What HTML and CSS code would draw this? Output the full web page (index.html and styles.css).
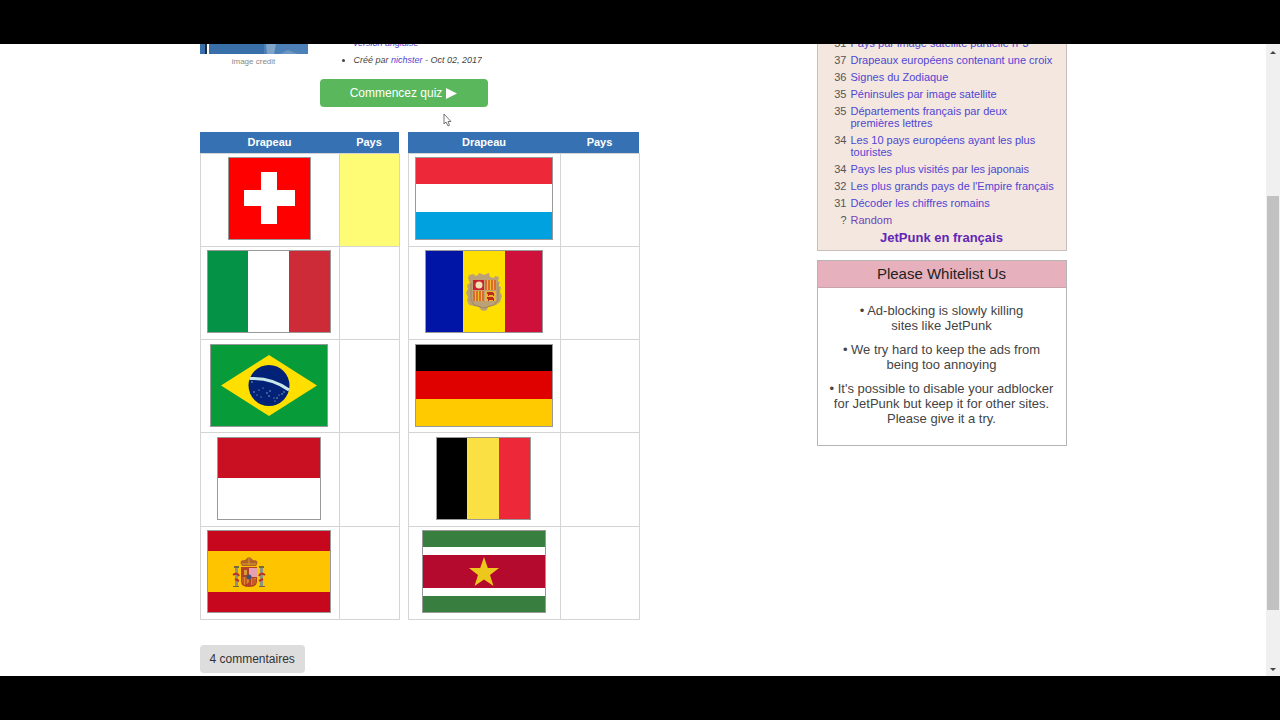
FILE: index.html
```html
<!DOCTYPE html>
<html lang="fr">
<head>
<meta charset="utf-8">
<title>Drapeaux - JetPunk</title>
<link rel="stylesheet" href="styles.css">
</head>
<body>
<div class="window">
  <div class="page">
    <div class="content">
      <main class="main">
        <div class="intro">
          <figure class="photo">
            <svg class="photo-img" viewBox="0 0 108 10" preserveAspectRatio="none" aria-hidden="true">
              <rect width="108" height="10" fill="#3a70aa"/>
              <rect x="64" width="44" height="10" fill="#4c80b6"/>
              <path d="M66 0h10l-2 10h-7z" fill="#7fa3c9"/>
              <path d="M80 10l8-4 10 4z" fill="#6d97c3"/>
              <path d="M5 0h2v10H5z" fill="#1d2c3c"/>
              <path d="M7 0h2v10H7z" fill="#fff"/>
            </svg>
            <figcaption>image credit</figcaption>
          </figure>
          <ul class="facts">
            <li class="plain"><a class="link" href="#">version anglaise</a></li>
            <li>Créé par <a class="link" href="#">nichster</a> - Oct 02, 2017</li>
          </ul>
        </div>
        <button class="start" type="button">Commencez quiz
          <svg width="11" height="11" viewBox="0 0 11 11" aria-hidden="true"><path d="M0 0L11 5.500L0 11z" fill="#fff"/></svg>
        </button>
        <div class="tables">
          <table class="quiz quiz-left">
            <thead><tr><th class="flag-col">Drapeau</th><th>Pays</th></tr></thead>
            <tbody>
              <tr><td><svg class="flag" width="83" height="83" viewBox="0 0 83 83"><rect width="83" height="83" fill="#fe0000"/><path d="M33 15h16v18h18v16H49v18H33V49H16V33h17z" fill="#fff"/></svg></td><td class="active"></td></tr>
              <tr><td><svg class="flag" width="124" height="83" viewBox="0 0 124 83"><rect width="124" height="83" fill="#fff"/><rect width="41" height="83" fill="#049247"/><rect x="82" width="42" height="83" fill="#cd2b38"/></svg></td><td></td></tr>
              <tr><td><svg class="flag" width="118" height="83" viewBox="0 0 118 83"><rect width="118" height="83" fill="#079b39"/><path d="M11 41.500L59 11l48 30.500L59 72z" fill="#fedf00"/><circle cx="59" cy="41.500" r="20.500" fill="#012276"/><path d="M39.500 34.500Q62 33.500 79 46" fill="none" stroke="#c9e6ea" stroke-width="3"/><g fill="#b4c5dd"><circle cx="42" cy="38" r=".7"/><circle cx="44" cy="48" r=".7"/><circle cx="47" cy="51" r=".6"/><circle cx="49" cy="46" r=".6"/><circle cx="53" cy="44" r=".6"/><circle cx="57" cy="49" r=".7"/><circle cx="60" cy="47" r=".7"/><circle cx="59" cy="52" r=".7"/><circle cx="64" cy="54" r=".6"/><circle cx="67" cy="54" r=".7"/><circle cx="69" cy="51" r=".6"/><circle cx="72" cy="50" r=".7"/><circle cx="74" cy="48" r=".7"/><circle cx="51" cy="53" r=".6"/><circle cx="65" cy="57" r=".6"/></g></svg></td><td></td></tr>
              <tr><td><svg class="flag" width="104" height="83" viewBox="0 0 104 83"><rect width="104" height="83" fill="#fff"/><rect width="104" height="41" fill="#c91022"/></svg></td><td></td></tr>
              <tr><td><svg class="flag" width="124" height="83" viewBox="0 0 124 83"><rect width="124" height="83" fill="#c6071e"/><rect y="21" width="124" height="41" fill="#ffc400"/>
                <g><path d="M28 37h3v19h-3zM53 37h3v19h-3z" fill="#8e9384"/><path d="M27 36h5v2h-5zM52 36h5v2h-5zM26 56h6v1h-6zM52 56h6v1h-6z" fill="#776a39"/><path d="M26 45q4-3 6 1m-4 3l4 2M58 45q-4-3-6 1m4 3l-4 2" fill="none" stroke="#b93328" stroke-width="2"/>
                <path d="M34 37h16v14q0 6-8 6t-8-6z" fill="#b34027"/><path d="M42 38h8v9h-8z" fill="#e3a1b3"/><path d="M35 47h7v5q-2 3-5 3-2-2-2-3zM44 48h5v5q-2 3-5 2z" fill="#dd832b"/><path d="M36 47v8M39 47v9M46 48v8M48 49v6" stroke="#a83622"/><circle cx="42" cy="47" r="2.500" fill="#3d5478"/><path d="M37 40h3v5h-3z" fill="#d69a35"/>
                <path d="M35 36q-4-6 3-6 3-3 4-3t4 3q7 0 3 6z" fill="#b26128"/><path d="M35 34h14M42 27v8" stroke="#d9a127"/></g></svg></td><td></td></tr>
            </tbody>
          </table>
          <table class="quiz quiz-right">
            <thead><tr><th class="flag-col">Drapeau</th><th>Pays</th></tr></thead>
            <tbody>
              <tr><td><svg class="flag" width="138" height="83" viewBox="0 0 138 83"><rect width="138" height="83" fill="#fff"/><rect width="138" height="27" fill="#ed2839"/><rect y="55" width="138" height="28" fill="#00a1df"/></svg></td><td></td></tr>
              <tr><td><svg class="flag" width="118" height="83" viewBox="0 0 118 83"><rect width="118" height="83" fill="#fedf00"/><rect width="38" height="83" fill="#0014a5"/><rect x="80" width="38" height="83" fill="#cf103a"/>
                <path d="M54 23l3 1 2 1 2-1 3-1 1 4 4 1 1-2 4 1-1 4 2 1-2 4 3 1-1 5 2 4-2 6-4 3-6 1-2 1-1 3-3 1-3-1-2-3-5-1-5-1-2-5 1-3-2-4 2-4-1-4 3-2-2-5 1-3 5-1 1 2 3-1z" fill="#bca176"/><path d="M46 33v17l3 5 10 3 10-3 4-5V33" fill="none" stroke="#9c8560"/>
                <path d="M48 30h11v10H48z" fill="#cc222d"/><path d="M60 30h11v10H60zM48 41h11v10H48z" fill="#edc12e"/><path d="M60 41h11v10H60z" fill="#efb22e"/><path d="M61 30v10M64 30v10M67 30v10M70 30v10M49 41v10M52 41v10M55 41v10M58 41v10" stroke="#d55129" stroke-width="1.500"/><circle cx="54" cy="35" r="3.500" fill="#f1e2b4"/><path d="M62 42h6v1h1v3h-1v-1h-4v1h-1v-2h-1zM62 47h6v1h1v3h-1v-1h-4v1h-1v-2h-1z" fill="#b92a20"/></svg></td><td></td></tr>
              <tr><td><svg class="flag" width="138" height="83" viewBox="0 0 138 83"><rect width="138" height="83" fill="#df0000"/><rect width="138" height="27" fill="#000"/><rect y="55" width="138" height="28" fill="#ffcb00"/></svg></td><td></td></tr>
              <tr><td><svg class="flag" width="95" height="83" viewBox="0 0 95 83"><rect width="95" height="83" fill="#fae042"/><rect width="31" height="83" fill="#000"/><rect x="63" width="32" height="83" fill="#ed2939"/></svg></td><td></td></tr>
              <tr><td><svg class="flag" width="124" height="83" viewBox="0 0 124 83"><rect width="124" height="83" fill="#fff"/><path d="M1 0h122v17H1zM1 66h122v17H1z" fill="#377e3f"/><rect x="1" y="25" width="122" height="33" fill="#b40a2d"/><path d="M62 27l3.800 11H77l-9 7 3.500 11-9.500-6.500L52.500 56 56 45l-9-7h11.200z" fill="#ecc81d"/></svg></td><td></td></tr>
            </tbody>
          </table>
        </div>
        <button class="comments" type="button">4 commentaires</button>
      </main>
      <aside class="side">
        <section class="picks">
          <ul class="pick-list">
            <li><span class="count">51</span><a class="link" href="#">Pays par image satellite partielle n°3</a></li>
            <li><span class="count">37</span><a class="link" href="#">Drapeaux européens contenant une croix</a></li>
            <li><span class="count">36</span><a class="link" href="#">Signes du Zodiaque</a></li>
            <li><span class="count">35</span><a class="link" href="#">Péninsules par image satellite</a></li>
            <li><span class="count">35</span><a class="link" href="#">Départements français par deux<br>premières lettres</a></li>
            <li><span class="count">34</span><a class="link" href="#">Les 10 pays européens ayant les plus<br>touristes</a></li>
            <li><span class="count">34</span><a class="link" href="#">Pays les plus visités par les japonais</a></li>
            <li><span class="count">32</span><a class="link" href="#">Les plus grands pays de l'Empire français</a></li>
            <li><span class="count">31</span><a class="link" href="#">Décoder les chiffres romains</a></li>
            <li><span class="count">?</span><a class="link visited" href="#">Random</a></li>
          </ul>
          <a class="more" href="#">JetPunk en français</a>
        </section>
        <section class="whitelist">
          <h2>Please Whitelist Us</h2>
          <div class="whitelist-body">
            <p>• Ad-blocking is slowly killing<br>sites like JetPunk</p>
            <p>• We try hard to keep the ads from<br>being too annoying</p>
            <p>• It's possible to disable your adblocker<br>for JetPunk but keep it for other sites.<br>Please give it a try.</p>
          </div>
        </section>
      </aside>
    </div>
  </div>
  <div class="scrollbar" aria-hidden="true">
    <svg width="6" height="3" viewBox="0 0 6 3"><path d="M0 3L3 0l3 3z" fill="#444"/></svg>
    <div class="track"><div class="thumb"></div></div>
    <svg width="6" height="3" viewBox="0 0 6 3"><path d="M0 0h6L3 3z" fill="#444"/></svg>
  </div>
  <svg class="cursor" width="9" height="14" viewBox="0 0 9 14" aria-hidden="true"><path d="M1 1v10l2-2 2 4 1.500-.7L5 8.500h3z" fill="#fff" stroke="#666" stroke-width=".9"/></svg>
</div>
</body>
</html>
```

FILE: styles.css
```css
* { box-sizing: border-box; }
body {
  margin: 0;
  padding: 44px 0;
  height: 100vh;
  background: #000;
  color: #444;
  font-family: "Liberation Sans", Arial, sans-serif;
  font-size: 11px;
}
.window {
  position: relative;
  display: flex;
  height: 100%;
  background: #fff;
  overflow: hidden;
}
.page { flex: 1; overflow: hidden; }
.content {
  display: flex;
  justify-content: space-between;
  align-items: flex-start;
  max-width: 867px;
  margin: 0 auto;
}
.link { color: #5046d2; text-decoration: none; }
.visited { color: #7442b8; }

.main { width: 440px; display: flex; flex-direction: column; align-items: flex-start; }
.intro {
  display: flex;
  align-items: flex-end;
  gap: 30px;
  height: 25px;
  overflow: hidden;
}
.photo { margin: 0; width: 108px; }
.photo-img { display: block; width: 100%; height: 10px; }
.photo figcaption { color: #888; font-size: 8px; line-height: 15px; text-align: center; }
.facts { margin: 0; padding-left: 16px; font-size: 9px; font-style: italic; line-height: 17px; }
.plain { list-style: none; }
.start {
  display: flex;
  align-items: center;
  justify-content: center;
  gap: 4px;
  width: 168px;
  height: 28px;
  margin: 10px 0 0 120px;
  border: 0;
  border-radius: 4px;
  background: #5ab75c;
  color: #fff;
  font: 12px "Liberation Sans", Arial, sans-serif;
}
.tables { display: flex; gap: 8px; margin-top: 25px; }
.quiz { border-collapse: collapse; table-layout: fixed; height: 488px; }
.quiz-left { width: 200px; }
.quiz-left .flag-col { width: 139px; }
.quiz-right { width: 232px; }
.quiz-right .flag-col { width: 152px; }
.quiz th {
  height: 21px;
  padding: 0;
  background: #3671b3;
  color: #fff;
  font-size: 11px;
  line-height: 20px;
}
.quiz td { padding: 0 1px 2px 0; border: 1px solid #d4d4d4; text-align: center; vertical-align: middle; }
.quiz .active { background: #fefb74; }
.flag { display: block; margin: 0 auto; outline: 1px solid #999; outline-offset: -1px; }
.comments {
  height: 28px;
  margin-top: 25px;
  padding: 0 10px;
  border: 0;
  border-radius: 4px;
  background: #ddd;
  color: #333;
  font: 12px "Liberation Sans", Arial, sans-serif;
}

.side { width: 250px; display: flex; flex-direction: column; gap: 9px; }
.picks { padding: 0 0 4px; border: 1px solid #c8bebc; border-top: 0; background: #f3e7e0; }
.pick-list { display: flex; flex-direction: column; gap: 5px; margin: -7px 0 0; padding: 0 0 0 14px; list-style: none; line-height: 12px; }
.pick-list li { display: flex; gap: 4px; }
.count { width: 15px; flex: none; text-align: right; color: #555; }
.more { display: block; margin-top: 4px; color: #6226b5; font-size: 13px; font-weight: bold; line-height: 16px; text-align: center; text-decoration: none; }
.whitelist { border: 1px solid #b5b5b5; text-align: center; }
.whitelist h2 { margin: 0; border-bottom: 1px solid #c9a3ab; background: #e6b0bc; color: #222; font-size: 15px; font-weight: normal; line-height: 26px; }
.whitelist-body { padding: 15px 8px 10px; font-size: 13px; line-height: 15px; }
.whitelist-body p { margin: 0 0 9px; }

.scrollbar {
  display: flex;
  flex-direction: column;
  align-items: center;
  width: 14px;
  padding: 7px 1px 5px;
  background: #f0f0f0;
}
.track { flex: 1; width: 100%; padding: 142px 0 58px; }
.thumb { height: 100%; background: #c1c1c1; }
.cursor { position: absolute; left: 443px; top: 69px; }
```
